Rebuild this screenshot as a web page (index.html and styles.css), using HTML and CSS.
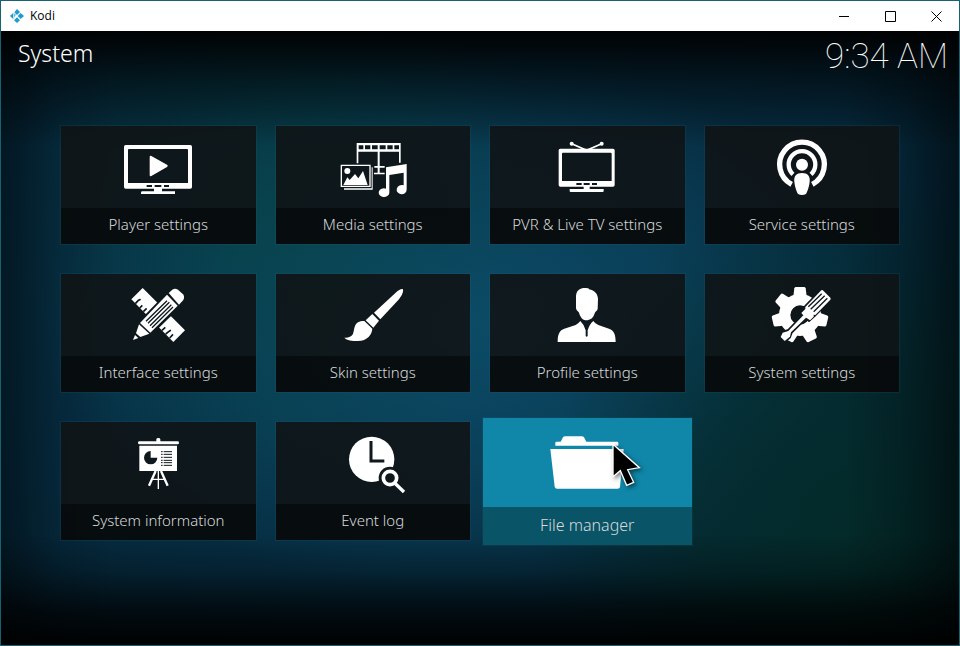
FILE: index.html
```html
<!DOCTYPE html>
<html lang="en">
<head>
  <meta charset="UTF-8"/>
  <meta name="viewport" content="width=device-width, initial-scale=1.0"/>
  <title>Kodi</title>
  <link rel="stylesheet" href="styles.css">
</head>
<body>
<div class="window">

  <!-- Title bar -->
  <div class="titlebar">
    <svg class="logo" viewBox="30 24 42 42" aria-hidden="true">
      <path d="M51 24L60 33L51 42L43 34Z"/>
      <path d="M40 35V55L30 45Z"/>
      <path d="M43 37L47 41L43 50Z"/>
      <path d="M62 36L72 45L62 54L53 45Z"/>
      <path d="M51 49L60 58L51 66L42 58Z"/>
    </svg>
    <span class="app-name">Kodi</span>
    <div class="window-buttons">
      <button type="button" aria-label="Minimize">
        <svg viewBox="0 0 11 11"><path d="M0 5.5H10"/></svg>
      </button>
      <button type="button" aria-label="Maximize">
        <svg viewBox="0 0 11 11"><path d="M.5 .5H10.5V10.5H.5Z"/></svg>
      </button>
      <button type="button" aria-label="Close">
        <svg viewBox="0 0 11 11"><path d="M.5 .5L10.5 10.5M10.5 .5L.5 10.5"/></svg>
      </button>
    </div>
  </div>

  <div class="screen">
    <!-- Header -->
    <header class="header">
      <h1>System</h1>
      <time class="clock" datetime="09:34">9:34 AM</time>
    </header>

    <!-- Settings tiles -->
    <main class="tiles">
      <a class="tile" href="#player">
        <span class="tile-icon">
          <svg viewBox="216 60 216 192">
            <path fill-rule="evenodd" d="M227 90H421Q426 90 426 95V216Q426 221 421 221H227Q222 221 222 216V95Q222 90 227 90ZM237 102Q234 102 234 105V204H414V105Q414 102 411 102ZM290 210V216H306V210ZM314 210V216H334V210ZM342 210V216H357V210Z"/>
            <path d="M299 126Q299 121 304 123L351 149Q356 152 351 156L304 183Q299 185 299 180Z"/>
            <path d="M312 217H336V229H375V237H273V233Q273 229 277 229H312Z"/>
          </svg>
        </span>
        <span class="tile-label">Player settings</span>
      </a>

      <a class="tile" href="#media">
        <span class="tile-icon">
          <svg viewBox="214 60 216 192">
            <path fill-rule="evenodd" d="M273 84H405V143H400V110H342V153H357V158H342V173H357V178H325V173H336V158H326V153H336V110H278V145H273ZM279 91V103H293V91ZM298 91V103H314V91ZM319 91V103H336V91ZM342 91V103H360V91ZM365 91V103H381V91ZM386 91V103H400V91Z"/>
            <path fill-rule="evenodd" d="M225 149H315V216H225ZM229 153V212H311V153Z"/>
            <path d="M318 157H321V224H235V220H318Z"/>
            <circle cx="245" cy="168" r="9"/>
            <path d="M233 210L245 187L252 195L268 177L278 190L292 168L306 210Z"/>
            <path d="M361 157L423 147V223A15 14 0 1 1 414 211V173L371 180V234A16 13 0 1 1 361 221Z"/>
          </svg>
        </span>
        <span class="tile-label">Media settings</span>
      </a>

      <a class="tile" href="#pvr">
        <span class="tile-icon">
          <svg viewBox="214 60 216 192">
            <circle cx="276" cy="86" r="6"/>
            <circle cx="366" cy="86" r="6"/>
            <path class="line" stroke-width="5" d="M276 86L321 106L366 86"/>
            <path fill-rule="evenodd" d="M242 101H400Q405 101 405 106V210Q405 215 400 215H242Q237 215 237 210V106Q237 101 242 101ZM250 113Q247 113 247 116V198H396V116Q396 113 393 113ZM290 204V210H306V204ZM312 204V210H330V204ZM337 204V210H352V204Z"/>
            <path d="M312 213H330V222H372V228Q372 231 369 231H273Q270 231 270 228V222H312Z"/>
          </svg>
        </span>
        <span class="tile-label">PVR &amp; Live TV settings</span>
      </a>

      <a class="tile" href="#service">
        <span class="tile-icon">
          <svg viewBox="213 60 216 192">
            <path class="line" stroke-width="16" d="M290 208A67 67 0 1 1 352 208"/>
            <path class="line" stroke-width="13" d="M294 178A40 40 0 1 1 348 178"/>
            <circle cx="321" cy="149" r="18"/>
            <path d="M321 174C338 174 346 184 344 200C342 218 336 232 333 237Q321 243 309 237C306 232 300 218 298 200C296 184 304 174 321 174Z"/>
          </svg>
        </span>
        <span class="tile-label">Service settings</span>
      </a>

      <a class="tile" href="#interface">
        <span class="tile-icon">
          <svg viewBox="216 54 216 192">
            <path d="M278 69L405 196L370 231L244 103Z"/>
            <path class="cut-line" stroke-width="5" d="M256 116L265 106Q269 103 272 104M269 129L277 121M280 140L290 130M336 196L346 187M347 207L356 200Q360 197 363 196M359 219L369 208"/>
            <path class="cut-line" stroke-width="10" d="M351 89L386 124L301 207L267 175Z"/>
            <path d="M351 89L383 122L301 203L270 174Z"/>
            <path d="M356 84L367 74Q375 68 384 74L399 88Q405 95 400 105L387 119Z"/>
            <path d="M267 178L298 206L271 216L258 205Z"/>
            <path d="M255 210L265 219L249 225Z"/>
            <path class="cut-line" stroke-width="4" d="M351 107L288 169M358 112L294 175M364 119L300 182M369 126L306 188"/>
          </svg>
        </span>
        <span class="tile-label">Interface settings</span>
      </a>

      <a class="tile" href="#skin">
        <span class="tile-icon">
          <svg viewBox="860 54 216 192">
            <path d="M1057 72Q1061 76 1054 91L1046 103L990 163L971 143L1036 83Q1050 70 1057 72Z"/>
            <path d="M966 147L986 167L969 188L946 166Z"/>
            <path d="M942 168L966 191C965 207 952 228 922 228C905 228 890 227 882 218Q899 220 908 207C914 192 908 168 942 168Z"/>
          </svg>
        </span>
        <span class="tile-label">Skin settings</span>
      </a>

      <a class="tile" href="#profile">
        <span class="tile-icon">
          <svg viewBox="214 54 216 192">
            <path d="M289 92C291 73 304 68 318 69L326 70L328 73C345 75 355 88 355 103L354 131C353 138 347 138 345 145C341 160 330 166 321 166C311 166 303 159 299 146C297 138 290 138 289 129Z"/>
            <path d="M234 231C234 206 240 196 254 191L288 180Q297 175 302 168Q313 178 318 196V213Q321 217 324 213V196Q329 178 341 168Q346 176 356 180L388 191C403 197 408 208 408 231Z"/>
          </svg>
        </span>
        <span class="tile-label">Profile settings</span>
      </a>

      <a class="tile" href="#system">
        <span class="tile-icon">
          <svg viewBox="858 54 216 192">
            <circle cx="960" cy="150" r="46" fill="none" class="line" stroke-width="34"/>
            <path id="tooth" d="M940 94L943 70Q944 66 948 66H972Q976 66 977 70L980 94Z"/>
            <use href="#tooth" transform="rotate(103 960 150)"/>
            <use href="#tooth" transform="rotate(154 960 150)"/>
            <use href="#tooth" transform="rotate(206 960 150)"/>
            <use href="#tooth" transform="rotate(257 960 150)"/>
            <use href="#tooth" transform="rotate(309 960 150)"/>
            <path class="cut cut-line" stroke-width="10" d="M1024 76L1052 102L1003 151L987 165L978 158L933 202L928 216L914 228L902 216L908 203L926 197L970 151L964 144L976 126Z"/>
            <path d="M1024 76Q1027 74 1030 77L1051 98Q1053 101 1051 104L1006 150L1001 149L1001 155L990 166L981 160L978 158L933 202L930 215L914 228L902 216L908 203L925 198L970 151L964 144L976 132V126Z"/>
            <path class="cut-line" stroke-width="4" d="M1025 86L985 125M1034 92L992 133M1042 100L1001 140"/>
          </svg>
        </span>
        <span class="tile-label">System settings</span>
      </a>

      <a class="tile" href="#information">
        <span class="tile-icon">
          <svg viewBox="216 57 216 192">
            <path d="M319 88V82Q319 78 325 78Q331 78 331 82V88H383Q387 88 387 92Q387 97 383 97H268Q264 97 264 92Q264 88 268 88Z"/>
            <path d="M268 101H381V177H268Z"/>
            <path class="cut" d="M302 117V137H322A20 20 0 1 1 302 117Z"/>
            <path class="cut-line" stroke-width="3" d="M341 119H366M341 127H366M341 136H366M341 145H366M341 152H366M341 160H366M333 119H338M333 127H338M333 136H338M333 145H338M333 152H338M333 160H338"/>
            <path class="line" stroke-width="7" d="M317 177L297 221M333 177L353 221"/>
            <path class="line" stroke-width="4" d="M325 177V231M306 202H344"/>
          </svg>
        </span>
        <span class="tile-label">System information</span>
      </a>

      <a class="tile" href="#eventlog">
        <span class="tile-icon">
          <svg viewBox="860 57 216 192">
            <circle cx="964" cy="142" r="68"/>
            <path class="cut-line" stroke-width="9" d="M962 87V147H1002"/>
            <circle class="cut" cx="1019" cy="198" r="34"/>
            <circle class="line" cx="1019" cy="198" r="20" stroke-width="11"/>
            <path class="line" stroke-width="10" d="M1033 213L1061 240"/>
          </svg>
        </span>
        <span class="tile-label">Event log</span>
      </a>

      <a class="tile focused" href="#files">
        <span class="tile-icon">
          <svg viewBox="237 69 234 207">
            <path d="M259 122V113Q259 110 263 110H275L282 97Q284 94 289 94H338Q343 94 345 97L352 110H445Q448 110 448 113V122Z"/>
            <path d="M244 132H464L453 246Q452 251 446 251H264Q258 251 257 245Z"/>
          </svg>
        </span>
        <span class="tile-label">File manager</span>
        <svg class="cursor" viewBox="427 111 93 138" aria-hidden="true">
          <path d="M433 118V215L455 197L474 241L495 232L477 194L512 188Z"/>
        </svg>
      </a>
    </main>
  </div>

</div>
</body>
</html>
```
FILE: styles.css
```css
* {
  margin: 0;
  padding: 0;
  box-sizing: border-box;
}

body {
  background: #000;
  font-family: 'Noto Sans', 'Open Sans', sans-serif;
}

.window {
  display: flex;
  flex-direction: column;
  min-height: 100vh;
  border: 1px solid #176272;
}

/* Title bar */
.titlebar {
  display: flex;
  align-items: center;
  height: 30px;
  padding-left: 9px;
  background: #fff;
}

.logo {
  width: 14px;
  height: 14px;
  fill: #1f9bcf;
}

.app-name {
  margin-left: 6px;
  font-family: 'Open Sans', sans-serif;
  font-size: 12px;
  line-height: 16px;
  color: #000;
}

.window-buttons {
  display: flex;
  height: 100%;
  margin-left: auto;
}

.window-buttons button {
  display: flex;
  align-items: center;
  justify-content: center;
  width: 46px;
  border: none;
  background: none;
}

.window-buttons button:hover {
  background: #e5e5e5;
}

.window-buttons svg {
  width: 11px;
  height: 11px;
  fill: none;
  stroke: #000;
}

/* Screen */
.screen {
  flex: 1;
  background:
    linear-gradient(to bottom, rgba(0, 0, 0, 0.95) 0%, rgba(0, 0, 0, 0.5) 8%, transparent 19%, transparent 82%, rgba(0, 0, 0, 0.25) 88%, rgba(0, 0, 0, 0.7) 94%, rgba(0, 0, 0, 0.97) 100%),
    linear-gradient(to right, rgba(0, 0, 0, 0.45) 0%, rgba(0, 0, 0, 0.12) 6%, transparent 12%, transparent 88%, rgba(0, 0, 0, 0.2) 94%, rgba(0, 0, 0, 0.55) 100%),
    radial-gradient(ellipse 28% 48% at 29% 30%, rgba(6, 72, 68, 0.5), transparent),
    radial-gradient(ellipse 34% 60% at 90% 84%, rgba(3, 42, 38, 0.9) 0%, rgba(3, 42, 38, 0.6) 50%, transparent 100%),
    radial-gradient(ellipse 60% 62% at 47% 47%, #0c4c6a 0%, rgba(11, 70, 96, 0.75) 40%, rgba(8, 54, 76, 0.3) 72%, transparent 100%),
    #05293d;
}

.header {
  display: flex;
  justify-content: space-between;
  align-items: flex-start;
  height: 95px;
  padding: 4px 11px 0 17px;
  color: #fff;
}

.header h1 {
  font-size: 23px;
  font-weight: 300;
  line-height: 36px;
}

.clock {
  font-family: Roboto, sans-serif;
  font-size: 35px;
  font-weight: 100;
  line-height: 44px;
}

/* Tiles */
.tiles {
  display: grid;
  grid-template-columns: repeat(4, 1fr);
  gap: 30px 20px;
  padding: 0 60px;
}

.tile {
  position: relative;
  display: flex;
  flex-direction: column;
  background: rgba(16, 20, 22, 0.9);
  box-shadow: 0 0 1px 1px rgba(50, 110, 125, 0.15);
  color: #d6d9da;
  text-decoration: none;
}

.tile-icon {
  display: flex;
  align-items: center;
  justify-content: center;
  height: 82px;
}

.tile-icon svg {
  width: 72px;
  height: 64px;
  fill: #fff;
}

.tile-label {
  height: 36px;
  background: rgba(0, 0, 0, 0.45);
  font-size: 15px;
  font-weight: 300;
  line-height: 32px;
  text-align: center;
}

.tile-icon .line {
  fill: none;
  stroke: #fff;
}

.tile-icon .cut {
  fill: #0f181c;
}

.tile-icon .cut-line {
  stroke: #0f181c;
}

.tile-icon path.cut-line:not(.cut) {
  fill: none;
}

/* Focused tile grows past its cell */
.tile.focused {
  margin: -4px -7px -5px;
  background: #1086a8;
}

.focused .tile-icon {
  height: 89px;
}

.focused .tile-icon svg {
  width: 78px;
  height: 69px;
}

.focused .tile-label {
  height: 38px;
  background: #0a5468;
  font-size: 16px;
  line-height: 36px;
}

.cursor {
  position: absolute;
  top: 24px;
  left: calc(50% + 24px);
  width: 31px;
  height: 46px;
  fill: #000;
  stroke: #fff;
  stroke-width: 4;
  filter: drop-shadow(2px 2px 2px rgba(0, 0, 0, 0.5));
}
```
